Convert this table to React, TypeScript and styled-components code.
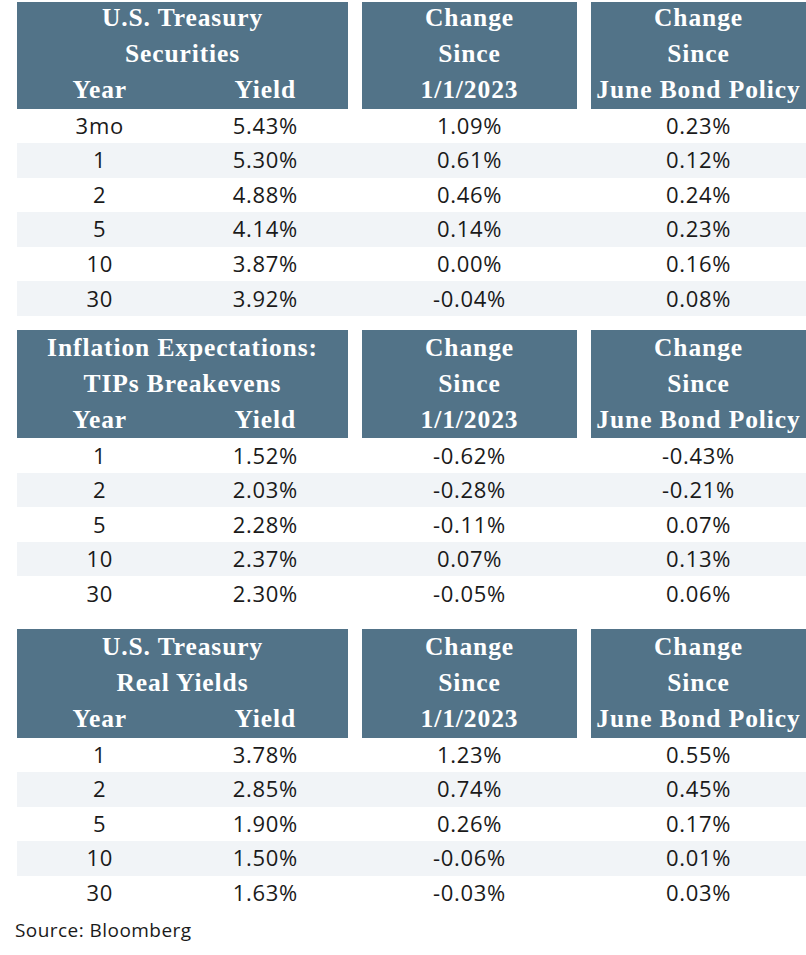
import React from "react";
import styled, { createGlobalStyle } from "styled-components";

const Global = createGlobalStyle`
  html, body { margin: 0; padding: 0; background: #ffffff; }
  body { font-family: "Open Sans", "Liberation Sans", sans-serif; }
`;

const HEADER_BG = "#527388";
const STRIPE_BG = "#f1f4f7";

const Page = styled.div`
  width: 806px;
  height: 955px;
  padding: 2px 0 0 17px;
  box-sizing: border-box;
  display: flex;
  flex-direction: column;
`;

const Section = styled.section<{ $gap: number }>`
  display: flex;
  flex-direction: column;
  margin-top: ${(p) => p.$gap}px;
`;

const HeaderRow = styled.div`
  display: grid;
  grid-template-columns: 331px 215px 215px;
  column-gap: 14px;
`;

const HeaderBlock = styled.div<{ $trim: number }>`
  background: ${HEADER_BG};
  color: #ffffff;
  height: ${(p) => 108.5 - p.$trim}px;
  overflow: hidden;
  font-family: "Liberation Serif", "Times New Roman", serif;
  font-weight: 700;
  font-size: 25.5px;
  letter-spacing: 0.9px;
  line-height: 36px;
  text-align: center;
  & > :first-child {
    margin-top: ${(p) => -p.$trim}px;
  }
`;

const HeadLine = styled.div`
  white-space: nowrap;
`;

const HeadPair = styled.div`
  display: grid;
  grid-template-columns: 1fr 1fr;
`;

const Row = styled.div<{ $striped: boolean }>`
  display: grid;
  grid-template-columns: 331px 215px 215px;
  column-gap: 14px;
  height: 34.55px;
  align-items: center;
  background: ${(p) => (p.$striped ? STRIPE_BG : "transparent")};
  font-size: 22px;
  line-height: 30px;
  letter-spacing: 0.7px;
  color: #1a1a1a;
  text-align: center;
`;

const Pair = styled.div`
  display: grid;
  grid-template-columns: 1fr 1fr;
`;

const Cell = styled.div`
  white-space: nowrap;
  padding-bottom: 2px;
`;

const Source = styled.div`
  margin-top: 8px;
  margin-left: -2px;
  font-size: 19px;
  letter-spacing: 0.45px;
  line-height: 24px;
  color: #1a1a1a;
`;

type Table = {
  title: [string, string];
  gap: number;
  trim: number;
  rows: [string, string, string, string][];
};

const tables: Table[] = [
  {
    title: ["U.S. Treasury", "Securities"],
    gap: 0,
    trim: 2,
    rows: [
      ["3mo", "5.43%", "1.09%", "0.23%"],
      ["1", "5.30%", "0.61%", "0.12%"],
      ["2", "4.88%", "0.46%", "0.24%"],
      ["5", "4.14%", "0.14%", "0.23%"],
      ["10", "3.87%", "0.00%", "0.16%"],
      ["30", "3.92%", "-0.04%", "0.08%"],
    ],
  },
  {
    title: ["Inflation Expectations:", "TIPs Breakevens"],
    gap: 14,
    trim: 0,
    rows: [
      ["1", "1.52%", "-0.62%", "-0.43%"],
      ["2", "2.03%", "-0.28%", "-0.21%"],
      ["5", "2.28%", "-0.11%", "0.07%"],
      ["10", "2.37%", "0.07%", "0.13%"],
      ["30", "2.30%", "-0.05%", "0.06%"],
    ],
  },
  {
    title: ["U.S. Treasury", "Real Yields"],
    gap: 18,
    trim: 0,
    rows: [
      ["1", "3.78%", "1.23%", "0.55%"],
      ["2", "2.85%", "0.74%", "0.45%"],
      ["5", "1.90%", "0.26%", "0.17%"],
      ["10", "1.50%", "-0.06%", "0.01%"],
      ["30", "1.63%", "-0.03%", "0.03%"],
    ],
  },
];

function YieldTable({ t }: { t: Table }) {
  return (
    <Section $gap={t.gap}>
      <HeaderRow>
        <HeaderBlock $trim={t.trim}>
          <HeadLine>{t.title[0]}</HeadLine>
          <HeadLine>{t.title[1]}</HeadLine>
          <HeadPair>
            <HeadLine>Year</HeadLine>
            <HeadLine>Yield</HeadLine>
          </HeadPair>
        </HeaderBlock>
        <HeaderBlock $trim={t.trim}>
          <HeadLine>Change</HeadLine>
          <HeadLine>Since</HeadLine>
          <HeadLine>1/1/2023</HeadLine>
        </HeaderBlock>
        <HeaderBlock $trim={t.trim}>
          <HeadLine>Change</HeadLine>
          <HeadLine>Since</HeadLine>
          <HeadLine>June Bond Policy</HeadLine>
        </HeaderBlock>
      </HeaderRow>
      {t.rows.map((r, i) => (
        <Row key={i} $striped={i % 2 === 1}>
          <Pair>
            <Cell>{r[0]}</Cell>
            <Cell>{r[1]}</Cell>
          </Pair>
          <Cell>{r[2]}</Cell>
          <Cell>{r[3]}</Cell>
        </Row>
      ))}
    </Section>
  );
}

export default function App() {
  return (
    <>
      <Global />
      <Page>
        {tables.map((t, i) => (
          <YieldTable key={i} t={t} />
        ))}
        <Source>Source: Bloomberg</Source>
      </Page>
    </>
  );
}
